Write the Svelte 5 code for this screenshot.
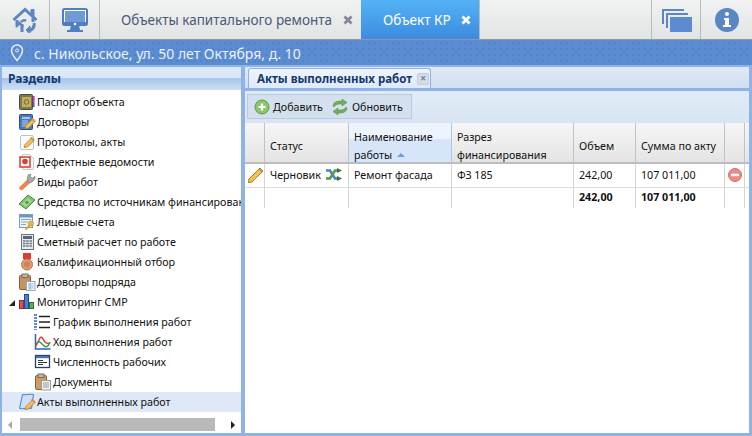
<script>
	const tree = [
		{ icon: 'passport', label: 'Паспорт объекта' },
		{ icon: 'contract', label: 'Договоры' },
		{ icon: 'protocol', label: 'Протоколы, акты' },
		{ icon: 'defect', label: 'Дефектные ведомости' },
		{ icon: 'wrench', label: 'Виды работ' },
		{ icon: 'money', label: 'Средства по источникам финансирования' },
		{ icon: 'account', label: 'Лицевые счета' },
		{ icon: 'calc', label: 'Сметный расчет по работе' },
		{ icon: 'medal', label: 'Квалификационный отбор' },
		{ icon: 'clip', label: 'Договоры подряда' },
		{ icon: 'bars', label: 'Мониторинг СМР', open: true },
		{ icon: 'schedule', label: 'График выполнения работ', child: true },
		{ icon: 'chart', label: 'Ход выполнения работ', child: true },
		{ icon: 'staff', label: 'Численность рабочих', child: true },
		{ icon: 'docs', label: 'Документы', child: true },
		{ icon: 'acts', label: 'Акты выполненных работ', selected: true }
	];
</script>

{#snippet pencil(x, y)}
	<path d="M{x} {y + 8.500}l1-3 6.500-6.500 2.500 2.500-6.500 6.500z" fill="#f5bf55" stroke="#b9803c" stroke-width=".9" />
	<path d="M{x + 6.500} {y - 1}l1-1 2.500 2.500-1 1z" fill="#eaa08a" stroke="#b9803c" stroke-width=".7" />
{/snippet}

{#snippet closeX()}
	<svg class="x" width="10" height="10" viewBox="0 0 10 10">
		<path d="M1.500 1.500l7 7M8.500 1.500l-7 7" stroke="currentColor" stroke-width="2.800" />
	</svg>
{/snippet}

{#snippet treeIcon(name)}
	<svg class="ticon" width="18" height="18" viewBox="0 0 18 18">
		{#if name === 'passport'}
			<rect x="1.500" y="1.500" width="13" height="15" rx="1" fill="#7a7a4a" stroke="#45503f" />
			<rect x="4" y="4" width="9" height="10" fill="#c2ad62" />
			<circle cx="8.500" cy="9" r="2.300" fill="none" stroke="#7a6a2c" />
			<rect x="15" y="3" width="1.600" height="4" fill="#d12bd1" />
			<rect x="15" y="7" width="1.600" height="3" fill="#e23a9c" />
			<rect x="15" y="10" width="1.600" height="4" fill="#2a6fe0" />
		{:else if name === 'contract'}
			<rect x="1.500" y="1.500" width="13" height="15" rx="1" fill="#4a78b8" stroke="#2b4f86" />
			<rect x="4" y="4" width="8" height="2" fill="#a9c4e8" />
			<rect x="4" y="7" width="6" height="7" fill="#7fa3d6" />
			{@render pencil(7, 7)}
		{:else if name === 'protocol'}
			<rect x="2.500" y="2.500" width="13" height="14" rx="1.500" fill="#fbfbfb" stroke="#c2c2c2" />
			{@render pencil(6, 6)}
		{:else if name === 'defect'}
			<path d="M4.500 1.500h7l4 4v11h-11z" fill="#f8f8f8" stroke="#cacaca" />
			<rect x="2" y="4" width="10" height="10" fill="#fff" stroke="#d93a2b" stroke-width="1.500" />
			<circle cx="7" cy="8.500" r="2.800" fill="#d9402f" />
		{:else if name === 'wrench'}
			<path d="M3.500 15l7.500-7" stroke="#e8874f" stroke-width="4.400" stroke-linecap="round" />
			<path d="M9 7l1-5 3-1-1 3 3 1 2-2v3l-3 3-3 1z" fill="#a8a8a8" stroke="#7a7a7a" stroke-width=".6" />
		{:else if name === 'money'}
			<path d="M1 11l9-9 7 5-9 9z" fill="#7fc06c" stroke="#4a9148" />
			<path d="M4 11l6-6 4 3-6 6z" fill="#a6d892" />
			<circle cx="9" cy="9.500" r="1.800" fill="#57a04f" />
		{:else if name === 'account'}
			<rect x="1.500" y="1.500" width="13" height="13" fill="#eef3fb" stroke="#7d9cc6" />
			<rect x="2" y="2" width="12" height="2.500" fill="#6f93c9" />
			<path d="M3 6.500h10M3 9h7M3 11.500h5" stroke="#7fb2a8" />
			<circle cx="13" cy="10.500" r="2.600" fill="#eab63f" stroke="#c98f2a" stroke-width=".6" />
			<path d="M11.500 12.500l-4 4" stroke="#d9a02e" stroke-width="1.800" />
		{:else if name === 'calc'}
			<rect x="3.500" y="1.500" width="12" height="15" fill="#e9e9e9" stroke="#6a6f78" />
			<rect x="5" y="3" width="9" height="3" fill="#56657a" />
			<path d="M5 8h2.500m.7 0h2.500m.8 0H14M5 10.500h2.500m.7 0h2.500m.8 0H14M5 13h2.500m.7 0h2.500m.8 0H14" stroke="#6d7787" stroke-width="1.500" />
		{:else if name === 'medal'}
			<path d="M5 0h8v6l-4 2-4-2z" fill="#dc3b36" />
			<circle cx="9" cy="11.500" r="5.500" fill="#dc9c72" stroke="#b9744a" />
			<circle cx="9" cy="11.500" r="3" fill="#c9855a" />
		{:else if name === 'clip'}
			<rect x="1.500" y="2.500" width="11" height="14" rx="1" fill="#c9945c" stroke="#8a5f2e" />
			<rect x="4" y="1" width="6" height="3.500" fill="#bfb8a8" stroke="#75705f" />
			<rect x="8.500" y="8.500" width="8.500" height="9" fill="#f5f8fc" stroke="#8ea9c9" />
			<path d="M10 11h5.500M10 13h5.500M10 15h5.500M12 10v7" stroke="#9bb6d6" />
		{:else if name === 'bars'}
			<rect x="1.500" y="7.500" width="4" height="8" fill="#d8525e" stroke="#8a2a3a" />
			<rect x="6.500" y="1.500" width="4" height="14" fill="#4d7fd1" stroke="#24498c" />
			<rect x="11.500" y="9.500" width="4" height="6" fill="#5cb05a" stroke="#2f6e31" />
		{:else if name === 'schedule'}
			<path d="M1.500 1v16" stroke="#5d8ed6" stroke-width="3" stroke-dasharray="2 1" />
			<path d="M5 3.500h11M5 9h11M5 14.500h11" stroke="#222" stroke-width="1.400" />
		{:else if name === 'chart'}
			<path d="M1.500 1v15h15" fill="#fff" stroke="#2f62b3" stroke-width="1.500" />
			<path d="M2 13L6 5c2-3 3 2 5 4s3 2 5 1" fill="none" stroke="#d8423d" stroke-width="1.500" />
			<path d="M2 11c3-4 4-2 7 1s5 2 7-3" fill="none" stroke="#3f9d47" stroke-width="1.500" />
		{:else if name === 'staff'}
			<rect x="1.500" y="2.500" width="14" height="12" fill="#fff" stroke="#27406e" stroke-width="1.300" />
			<rect x="2" y="3" width="13" height="2.200" fill="#4a73b5" />
			<path d="M4 7.500h5M4 9.500h9M4 11.500h5" stroke="#333" />
		{:else if name === 'docs'}
			<rect x="1.500" y="2.500" width="11" height="14" rx="1.500" fill="#cf9c62" stroke="#8a5f2e" />
			<rect x="4" y="1" width="6" height="3.500" fill="#bfb8a8" stroke="#75705f" />
			<rect x="7.500" y="7.500" width="9" height="9.500" fill="#f2f2f2" stroke="#9a9a9a" />
			<path d="M9 10h6M9 12h6M9 14h6" stroke="#999" />
		{:else if name === 'acts'}
			<path d="M4.500 1.500c4 1 7-1 11 0l-2 14c-4-1-8 1-12 0z" fill="#cfe0f6" stroke="#4d7fc4" />
			{@render pencil(7, 8)}
		{/if}
	</svg>
{/snippet}

<div class="page">
	<header class="topbar">
		<button class="cell">
			<svg width="26" height="26" viewBox="0 0 26 26" fill="none" stroke="#5b86c4">
				<path d="M1.500 13L13 2.500 24.500 13" stroke-width="3" />
				<path d="M19 7V2.500h3v7" fill="#5b86c4" stroke-width="1" />
				<path d="M5 13v5M21 11v4M10 25v-8" stroke-width="3" />
				<path d="M4 20l3.500-4 3.500 4M9 15c2-2 4-2 5-1" stroke-width="2.500" />
				<path d="M22 16c1 4-2 8-7 8" stroke-width="3" />
				<path d="M18 19l-4 4 4 3z" fill="#5b86c4" stroke-width="1" />
			</svg>
		</button>
		<button class="cell">
			<svg width="26" height="24" viewBox="0 0 26 24">
				<rect x="1" y="1" width="24" height="16" rx="1.500" fill="#fff" stroke="#4f7fc0" stroke-width="2" />
				<rect x="3" y="3" width="20" height="11" fill="#6f9ad6" />
				<rect x="2" y="14" width="22" height="3" fill="#4f7fc0" />
				<path d="M9 17h8l1 5h3v2H5v-2h3z" fill="#4f7fc0" />
				<circle cx="13" cy="16" r="1.300" fill="#fff" />
			</svg>
		</button>
		<div class="tab">
			<span>Объекты капитального ремонта</span>
			{@render closeX()}
		</div>
		<div class="tab active">
			<span>Объект КР</span>
			{@render closeX()}
		</div>
		<div class="spacer"></div>
		<button class="cell">
			<svg class="windows" width="30" height="24" viewBox="0 0 30 24" fill="#5b86c4">
				<path d="M0 1h22v2H2v13H0z" />
				<path d="M4 5h22v2H6v13H4z" />
				<rect x="8" y="9" width="22" height="15" fill="#5b8bd0" />
			</svg>
		</button>
		<button class="cell">
			<svg width="24" height="24" viewBox="0 0 24 24">
				<circle cx="12" cy="12" r="12" fill="#5b86c4" />
				<circle cx="12" cy="6" r="2" fill="#fff" />
				<path d="M9 10h5v7h2v2H8v-2h2v-5H9z" fill="#fff" />
			</svg>
		</button>
	</header>

	<div class="address">
		<svg width="14" height="18" viewBox="0 0 14 18">
			<path d="M7 1a5.500 5.500 0 0 0-5.500 5.500C1.500 10 7 16.500 7 16.500S12.500 10 12.500 6.500A5.500 5.500 0 0 0 7 1z" fill="none" stroke="#e4edf8" stroke-width="1.500" />
			<circle cx="7" cy="6.500" r="1.500" fill="none" stroke="#e4edf8" />
		</svg>
		<span>с. Никольское, ул. 50 лет Октября, д. 10</span>
	</div>

	<main class="main">
		<aside class="side">
			<div class="side-title">Разделы</div>
			<ul class="tree">
				{#each tree as item}
					<li class:child={item.child} class:selected={item.selected}>
						{#if item.open}<i class="arrow"></i>{/if}
						{@render treeIcon(item.icon)}
						<span>{item.label}</span>
					</li>
				{/each}
			</ul>
			<div class="scroll">
				<i class="sl"></i>
				<div class="thumb"></div>
				<i class="sr"></i>
			</div>
		</aside>

		<section class="content">
			<div class="strip">
				<div class="ctab">
					<span>Акты выполненных работ</span>
					<i class="ctab-x">×</i>
				</div>
			</div>
			<div class="toolbar">
				<div class="tools">
					<button class="tool">
						<svg width="16" height="16" viewBox="0 0 16 16">
							<circle cx="8" cy="8" r="7" fill="#8cc56c" stroke="#5b9a4a" />
							<path d="M8 4.500v7M4.500 8h7" stroke="#fff" stroke-width="2.200" />
						</svg>
						Добавить
					</button>
					<button class="tool">
						<svg width="18" height="16" viewBox="0 0 18 16" fill="#71b056" stroke="#4f8f3e" stroke-width=".5">
							<path d="M2 7c0-3 3-5 7-5h2V0l5 3.500L11 7V5H9C6 5 4 6 3 8z" />
							<path d="M16 9c0 3-3 5-7 5H7v2l-5-3.500L7 9v2h2c3 0 5-1 6-3z" />
						</svg>
						Обновить
					</button>
				</div>
			</div>
			<div class="grid">
				<div class="hd"></div>
				<div class="hd"><span>Статус</span></div>
				<div class="hd sorted">
					<span>Наименование<br />работы <i class="sort"></i></span>
				</div>
				<div class="hd"><span>Разрез<br />финансирования</span></div>
				<div class="hd"><span>Объем</span></div>
				<div class="hd"><span>Сумма по акту</span></div>
				<div class="hd"></div>
				<div class="hd end"></div>

				<div class="td icon">
					<svg width="16" height="16" viewBox="0 0 16 16">
						<path d="M1 12L11 2l3 3L4 15l-4 1z" fill="#f2c14e" stroke="#b27a3a" />
						<path d="M11 2l1-1 3 3-1 1z" fill="#e9a38a" stroke="#b27a3a" />
					</svg>
				</div>
				<div class="td status">
					Черновик
					<svg width="16" height="13" viewBox="0 0 16 13">
						<path d="M0 2.500h4l5 8h3" fill="none" stroke="#4d7fc4" stroke-width="2.600" />
						<path d="M0 10.500h4l5-8h3" fill="none" stroke="#4e9d4a" stroke-width="2.600" />
						<path d="M11 0l5 2.500L11 5zM11 8l5 2.500L11 13z" fill="#3d6e3b" />
					</svg>
				</div>
				<div class="td">Ремонт фасада</div>
				<div class="td">ФЗ 185</div>
				<div class="td">242,00</div>
				<div class="td">107 011,00</div>
				<div class="td icon">
					<svg width="14" height="14" viewBox="0 0 14 14">
						<circle cx="7" cy="7" r="6.500" fill="#ea8b86" stroke="#d2706b" />
						<rect x="3" y="5.800" width="8" height="2.400" fill="#fff" />
					</svg>
				</div>
				<div class="td end"></div>

				<div class="td"></div>
				<div class="td"></div>
				<div class="td"></div>
				<div class="td"></div>
				<div class="td total">242,00</div>
				<div class="td total">107 011,00</div>
				<div class="td"></div>
				<div class="td end"></div>
			</div>
		</section>
	</main>
</div>

<style>
	:global(body) {
		margin: 0;
		overflow: hidden;
	}

	.page {
		width: 752px;
		height: 436px;
		display: flex;
		flex-direction: column;
		font-family: "Noto Sans", "Liberation Sans", sans-serif;
		font-size: 10.7px;
		color: #111;
		background: #8fb3e6;
		overflow: hidden;
	}

	button {
		border: 0;
		padding: 0;
		font: inherit;
		color: inherit;
		background: none;
	}

	.topbar {
		height: 39px;
		flex: none;
		display: flex;
		background: linear-gradient(#f1f2f2, #e2e3e3);
		border-bottom: 1px solid #8f99a6;
	}

	.cell {
		width: 50px;
		display: flex;
		align-items: center;
		justify-content: center;
		border-right: 1px solid #b9bcbf;
	}

	.cell:nth-last-child(2) {
		border-left: 1px solid #b9bcbf;
		border-right: 1px solid #b9bcbf;
	}

	.cell:last-child {
		border: 0;
		width: 51px;
	}

	.windows {
		margin-left: 2px;
	}

	.tab {
		width: 261px;
		display: flex;
		align-items: center;
		justify-content: space-between;
		padding: 0 8px 0 21px;
		box-sizing: border-box;
		font-size: 13.500px;
		color: #4a5a78;
	}

	.tab .x {
		color: #7f8894;
	}

	.tab.active {
		width: 119px;
		padding-left: 22px;
		color: #fff;
		background: linear-gradient(#55b2f6, #3b8be0);
		border-right: 1px solid #b9bcbf;
	}

	.tab.active .x {
		color: #fff;
	}

	.spacer {
		flex: 1;
	}

	.address {
		height: 25px;
		flex: none;
		box-sizing: border-box;
		display: flex;
		align-items: center;
		gap: 10px;
		padding: 1px 0 0 10px;
		font-size: 14px;
		color: #eaf1fb;
		background-color: #5b8bd0;
		background-image: radial-gradient(#5384cb 1px, transparent 1px);
		background-size: 6px 6px;
	}

	.main {
		flex: 1;
		min-height: 0;
		display: flex;
		gap: 4px;
		padding: 2px 3px 3px 2px;
	}

	.side {
		width: 239px;
		flex: none;
		display: flex;
		flex-direction: column;
		background: #fff;
	}

	.side-title {
		height: 23px;
		flex: none;
		display: flex;
		align-items: center;
		padding-left: 6px;
		font-size: 12px;
		font-weight: 700;
		color: #15396b;
		background: linear-gradient(#dbe8f7 0 50%, #a9c6ec 50% 54%, #cfe0f4);
	}

	.tree {
		flex: 1;
		min-height: 0;
		margin: 2px 0 0;
		padding: 0;
		list-style: none;
		overflow: hidden;
	}

	.tree li {
		position: relative;
		height: 20px;
		display: flex;
		align-items: center;
		gap: 1px;
		padding-left: 16px;
		white-space: nowrap;
	}

	.tree li.child {
		padding-left: 32px;
	}

	.tree li.selected {
		background: #dfe8f6;
	}

	.ticon {
		flex: none;
	}

	.arrow {
		position: absolute;
		left: 7px;
		top: 8px;
		width: 0;
		height: 0;
		border-left: 6px solid transparent;
		border-bottom: 6px solid #222;
	}

	.scroll {
		height: 21px;
		flex: none;
		box-sizing: border-box;
		display: flex;
		align-items: flex-end;
		padding: 0 6px 2px;
		background: #fff;
	}

	.thumb {
		width: 195px;
		height: 13px;
		margin-left: 8px;
		background: #b9b9b9;
	}

	.sl,
	.sr {
		width: 0;
		height: 0;
		margin-bottom: 2px;
		border-top: 4px solid transparent;
		border-bottom: 4px solid transparent;
	}

	.sl {
		border-right: 4px solid #aaa;
	}

	.sr {
		margin-left: auto;
		border-left: 4px solid #222;
	}

	.content {
		flex: 1;
		min-width: 0;
		display: flex;
		flex-direction: column;
		background: #fff;
	}

	.strip {
		height: 21px;
		flex: none;
		display: flex;
		align-items: flex-end;
		padding-left: 3px;
		background: linear-gradient(#dfe9f6, #d1dff1);
		border-bottom: 2px solid #8fb3e6;
	}

	.ctab {
		height: 19px;
		display: flex;
		align-items: center;
		gap: 5px;
		padding: 0 1px 0 8px;
		font-size: 11.500px;
		font-weight: 700;
		color: #15396b;
		background: linear-gradient(#edf4fd, #dfe9f8);
		border: 1px solid #8fb3e6;
		border-bottom: 0;
		border-radius: 3px 3px 0 0;
	}

	.ctab-x {
		width: 10px;
		height: 10px;
		font-style: normal;
		font-size: 10px;
		font-weight: 700;
		line-height: 9px;
		text-align: center;
		color: #6f7f96;
		background: #d4dce8;
		border: 1px solid #c3cede;
		border-radius: 2px;
	}

	.toolbar {
		height: 33px;
		flex: none;
		box-sizing: border-box;
		padding: 3px 2px;
		background: linear-gradient(#e1ebf7, #d8e4f3);
		border-top: 1px solid #8fb3e6;
	}

	.tools {
		width: 165px;
		height: 25px;
		box-sizing: border-box;
		display: flex;
		align-items: center;
		gap: 8px;
		padding-left: 6px;
		background: #d5e0ef;
		border: 1px solid #bcc9dc;
	}

	.tool {
		display: flex;
		align-items: center;
		gap: 3px;
	}

	.grid {
		display: grid;
		grid-template-columns: 20px 84px 103px 122px 62px 89px 20px 4px;
		grid-template-rows: 41px 24px 20px;
		align-content: start;
	}

	.hd {
		box-sizing: border-box;
		display: flex;
		align-items: center;
		padding: 6px 0 0 5px;
		line-height: 18px;
		background: linear-gradient(#f6f6f6, #e4e4e4);
		border-right: 1px solid #c2c2c2;
		border-bottom: 2px solid #bdbdbd;
	}

	.hd.sorted {
		background: linear-gradient(#edf4fd 0 40%, #d6e6f8 40%);
		border-right-color: #a9c6ec;
	}

	.hd.end,
	.td.end {
		padding: 0;
		border-right: 0;
	}

	.sort {
		display: inline-block;
		width: 0;
		height: 0;
		margin: 0 0 2px 2px;
		border-left: 4px solid transparent;
		border-right: 4px solid transparent;
		border-bottom: 4px solid #6f9bd6;
	}

	.td {
		box-sizing: border-box;
		display: flex;
		align-items: center;
		padding: 0 0 2px 5px;
		border-right: 1px solid #d4d4d4;
		border-bottom: 1px solid #dedede;
	}

	.grid > .td:nth-last-child(-n + 8) {
		padding-bottom: 2px;
		border-bottom: 0;
	}

	.td.icon {
		padding-left: 3px;
	}

	.status {
		gap: 5px;
	}

	.total {
		font-weight: 700;
	}
</style>
